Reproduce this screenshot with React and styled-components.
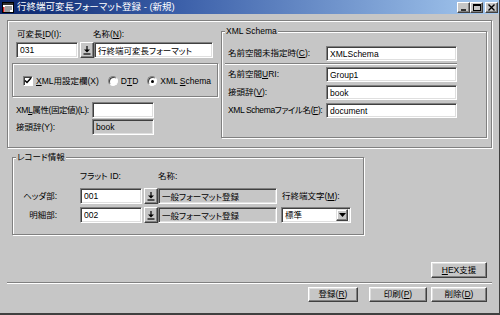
import React from 'react';
import styled, { createGlobalStyle } from 'styled-components';

const FONT = `"Liberation Sans", "Noto Sans CJK JP", sans-serif`;
const GRAY = '#c6c6c6';

const Global = createGlobalStyle`
  html, body { margin: 0; padding: 0; background: ${GRAY}; }
  body {
    font-family: ${FONT};
    font-size: 8.5px;
    color: #000;
    overflow: hidden;
    font-feature-settings: "palt";
  }
  * { box-sizing: border-box; }
`;

const Window = styled.div`
  width: 500px;
  height: 315px;
  background: ${GRAY};
  display: flex;
  flex-direction: column;
  border-right: 1px solid #404040;
  border-bottom: 2px solid #404040;
  overflow: hidden;
`;

const TitleBar = styled.div`
  height: 14px;
  flex: none;
  display: flex;
  align-items: center;
  padding: 0 1px 0 2px;
  background: linear-gradient(90deg, #0a246a 0%, #3a5ea8 35%, #a6caf0 100%);
`;

const TitleText = styled.span`
  color: #fff;
  font-size: 9.5px;
  line-height: 14px;
  margin-left: 3px;
  flex: 1;
  white-space: nowrap;
`;

const CapButton = styled.div`
  width: 13px;
  height: 11px;
  margin-left: ${(p) => (p.$gap ? 2 : 0)}px;
  background: ${GRAY};
  border: 1px solid;
  border-color: #fff #404040 #404040 #fff;
  box-shadow: inset -1px -1px #808080;
  display: flex;
  align-items: center;
  justify-content: center;
`;

const Body = styled.div`
  flex: 1;
  display: flex;
  flex-direction: column;
`;

const TopFrame = styled.div`
  margin: 6px 0 0 7px;
  width: 485px;
  height: 128px;
  border: 1px solid #808080;
  box-shadow: inset 1px 1px #fff, 1px 1px #fff;
  display: flex;
  align-items: flex-start;
`;

const LeftCol = styled.div`
  width: 206px;
  margin-left: 4px;
  display: flex;
  flex-direction: column;
`;

const LabelPair = styled.div`
  margin-top: 8px;
  height: 11px;
  display: flex;
  align-items: center;
  padding-left: 5px;
`;

const Label = styled.span`
  display: inline-block;
  width: ${(p) => (p.$w ? `${p.$w}px` : 'auto')};
  text-align: ${(p) => p.$align || 'left'};
  margin-left: ${(p) => p.$ml || 0}px;
  letter-spacing: ${(p) => (p.$tight ? '-0.4px' : 'normal')};
  white-space: nowrap;
  line-height: 11px;
  flex: none;
`;

const U = styled.span`
  text-decoration: underline;
`;

const Row = styled.div`
  display: flex;
  align-items: center;
  margin-top: ${(p) => p.$mt || 0}px;
  padding-left: ${(p) => p.$pl || 0}px;
`;

const TextBox = styled.input`
  width: ${(p) => p.$w}px;
  height: ${(p) => p.$h || 16}px;
  flex: none;
  margin: 0;
  margin-left: ${(p) => p.$ml || 0}px;
  padding: 0 0 0 3px;
  font-family: ${FONT};
  font-size: 8.5px;
  font-feature-settings: "palt";
  color: #000;
  background: ${(p) => (p.readOnly && p.$gray ? GRAY : '#fff')};
  border: 1px solid;
  border-color: #808080 #fff #fff #808080;
  box-shadow: inset 1px 1px #404040, inset -1px -1px #dfdfdf;
  outline: none;
`;

const PickButton = styled.div`
  width: 14px;
  height: 16px;
  flex: none;
  margin-left: 2px;
  background: ${GRAY};
  border: 1px solid;
  border-color: #fff #404040 #404040 #fff;
  box-shadow: inset -1px -1px #808080;
  display: flex;
  align-items: center;
  justify-content: center;
`;

const OptionsBox = styled.div`
  margin-top: 5px;
  height: 34px;
  width: 206px;
  border: 1px solid #808080;
  box-shadow: inset 1px 1px #fff, 1px 1px #fff;
  display: flex;
  align-items: center;
  padding-left: 10px;
  padding-top: 2px;
`;

const Check = styled.span`
  width: 10px;
  height: 10px;
  flex: none;
  background: #fff;
  border: 1px solid;
  border-color: #808080 #fff #fff #808080;
  box-shadow: inset 1px 1px #404040;
  display: flex;
  align-items: center;
  justify-content: center;
  margin-right: 3px;
`;

const Radio = styled.span`
  width: 10px;
  height: 10px;
  flex: none;
  border-radius: 50%;
  background: #fff;
  border: 1px solid;
  border-color: #808080 #fff #fff #808080;
  box-shadow: inset 1px 1px #404040;
  display: flex;
  align-items: center;
  justify-content: center;
  margin-left: ${(p) => p.$ml || 0}px;
  margin-right: 3px;
  &::after {
    content: '';
    display: ${(p) => (p.$on ? 'block' : 'none')};
    width: 3px;
    height: 3px;
    border-radius: 50%;
    background: #000;
  }
`;

const Group = styled.div`
  position: relative;
  width: ${(p) => p.$w}px;
  height: ${(p) => p.$h}px;
  margin-top: ${(p) => p.$mt || 0}px;
  margin-left: ${(p) => p.$ml || 0}px;
  flex: none;
  border: 1px solid #808080;
  box-shadow: inset 1px 1px #fff, 1px 1px #fff;
  display: flex;
  flex-direction: column;
  padding-top: ${(p) => p.$pt || 0}px;
  padding-left: ${(p) => p.$pl || 0}px;
`;

const Legend = styled.span`
  position: absolute;
  top: -6px;
  left: 3px;
  padding: 0 1px;
  background: ${GRAY};
  line-height: 11px;
  white-space: nowrap;
`;

const Etched = styled.div`
  width: ${(p) => p.$w}px;
  height: 2px;
  flex: none;
  margin: ${(p) => p.$m};
  border-top: 1px solid #808080;
  border-bottom: 1px solid #fff;
`;

const Combo = styled.div`
  width: 70px;
  height: 16px;
  flex: none;
  margin-left: 4px;
  background: #fff;
  border: 1px solid;
  border-color: #808080 #fff #fff #808080;
  box-shadow: inset 1px 1px #404040, inset -1px -1px #dfdfdf;
  display: flex;
  align-items: center;
  padding: 2px 2px 2px 3px;
`;

const ComboText = styled.span`
  flex: 1;
  line-height: 11px;
`;

const ComboButton = styled.span`
  width: 12px;
  height: 12px;
  flex: none;
  background: ${GRAY};
  border: 1px solid;
  border-color: #dfdfdf #404040 #404040 #dfdfdf;
  box-shadow: inset -1px -1px #808080, inset 1px 1px #fff;
  display: flex;
  align-items: center;
  justify-content: center;
`;

const ButtonRow = styled.div`
  display: flex;
  justify-content: flex-end;
  padding-right: 12px;
  margin-top: ${(p) => p.$mt || 0}px;
`;

const PushButton = styled.div`
  width: ${(p) => p.$w}px;
  height: ${(p) => p.$h || 15}px;
  margin-left: ${(p) => p.$ml || 0}px;
  flex: none;
  background: ${GRAY};
  border: 1px solid;
  border-color: #fff #404040 #404040 #fff;
  box-shadow: inset -1px -1px #808080, inset 1px 1px #dfdfdf;
  display: flex;
  align-items: center;
  justify-content: center;
  line-height: 11px;
  white-space: nowrap;
`;

const PickIcon = () => (
  <svg width="8" height="9" viewBox="0 0 8 9">
    <path d="M4 0v5" stroke="#000" strokeWidth="1.2" />
    <path d="M1 3.5h6L4 6.5z" fill="#000" />
    <path d="M0.5 8h7" stroke="#000" strokeWidth="1.2" />
  </svg>
);

const AppIcon = () => (
  <svg width="12" height="11" viewBox="0 0 12 11">
    <rect x="0.5" y="0.5" width="11" height="10" fill="#fff" stroke="#000" />
    <rect x="1" y="1" width="10" height="2" fill="#303030" />
    <path d="M3 5h7M3 7h7M3 9h5" stroke="#404040" />
    <rect x="1" y="5" width="1.5" height="5" fill="#d02020" />
  </svg>
);

export default function App() {
  return (
    <>
      <Global />
      <Window>
        <TitleBar>
          <AppIcon />
          <TitleText>行終端可変長フォーマット登録 - (新規)</TitleText>
          <CapButton>
            <svg width="7" height="7" viewBox="0 0 7 7">
              <path d="M1 6h5" stroke="#000" strokeWidth="1.5" />
            </svg>
          </CapButton>
          <CapButton>
            <svg width="8" height="7" viewBox="0 0 8 7">
              <rect x="0.5" y="0.5" width="7" height="6" fill="none" stroke="#000" />
              <path d="M0.5 1.5h7" stroke="#000" />
            </svg>
          </CapButton>
          <CapButton $gap>
            <svg width="7" height="7" viewBox="0 0 7 7">
              <path d="M0.5 0.5l6 6M6.5 0.5l-6 6" stroke="#000" strokeWidth="1.4" />
            </svg>
          </CapButton>
        </TitleBar>

        <Body>
          <TopFrame>
            <LeftCol>
              <LabelPair>
                <Label $w={76}>
                  可変長<U>I</U>D(I):
                </Label>
                <Label>
                  名称(<U>N</U>):
                </Label>
              </LabelPair>
              <Row $mt={2} $pl={4}>
                <TextBox $w={62} readOnly value="031" />
                <PickButton>
                  <PickIcon />
                </PickButton>
                <TextBox $w={119} readOnly value="行終端可変長フォーマット" />
              </Row>
              <OptionsBox>
                <Check>
                  <svg width="8" height="8" viewBox="0 0 8 8">
                    <path d="M1 3.5l2 2 4-4.5" stroke="#000" strokeWidth="1.5" fill="none" />
                  </svg>
                </Check>
                <Label>
                  <U>X</U>ML用設定欄(X)
                </Label>
                <Radio $ml={9} />
                <Label>
                  D<U>T</U>D
                </Label>
                <Radio $ml={9} $on />
                <Label>
                  XML <U>S</U>chema
                </Label>
              </OptionsBox>
              <Row $mt={5} $pl={4}>
                <Label $w={76} $tight>
                  XM<U>L</U>属性(固定値)(L):
                </Label>
                <TextBox $w={62} readOnly value="" />
              </Row>
              <Row $mt={1} $pl={4}>
                <Label $w={76}>接頭辞(Y):</Label>
                <TextBox $w={62} readOnly $gray value="book" />
              </Row>
            </LeftCol>

            <Group $w={266} $h={107} $mt={10} $ml={3} $pt={14} $pl={6}>
              <Legend>XML Schema</Legend>
              <Row>
                <Label $w={98}>
                  名前空間未指定時(<U>C</U>):
                </Label>
                <TextBox $w={131} $h={15} readOnly value="XMLSchema" />
              </Row>
              <Etched $w={232} $m="2px 0 2px -3px" />
              <Row>
                <Label $w={98}>
                  名前空間<U>U</U>RI:
                </Label>
                <TextBox $w={131} $h={15} readOnly value="Group1" />
              </Row>
              <Row $mt={3}>
                <Label $w={98}>
                  接頭辞(<U>V</U>):
                </Label>
                <TextBox $w={131} $h={15} readOnly value="book" />
              </Row>
              <Row $mt={3}>
                <Label $w={98} $tight>
                  XML Schemaファイル名(<U>F</U>):
                </Label>
                <TextBox $w={131} $h={15} readOnly value="document" />
              </Row>
            </Group>
          </TopFrame>

          <Group $w={352} $h={78} $mt={9} $ml={12} $pt={13}>
            <Legend>レコード情報</Legend>
            <Row $pl={67}>
              <Label $w={78}>フラット ID:</Label>
              <Label>名称:</Label>
            </Row>
            <Row $mt={6}>
              <Label $w={44} $align="right">
                ヘッダ部:
              </Label>
              <TextBox $w={62} $ml={23} readOnly value="001" />
              <PickButton>
                <PickIcon />
              </PickButton>
              <TextBox $w={119} readOnly $gray value="一般フォーマット登録" />
              <Label $ml={5}>
                行終端文字(<U>M</U>):
              </Label>
            </Row>
            <Row $mt={3}>
              <Label $w={44} $align="right">
                明細部:
              </Label>
              <TextBox $w={62} $ml={23} readOnly value="002" />
              <PickButton>
                <PickIcon />
              </PickButton>
              <TextBox $w={119} readOnly $gray value="一般フォーマット登録" />
              <Combo>
                <ComboText>標準</ComboText>
                <ComboButton>
                  <svg width="7" height="4" viewBox="0 0 7 4">
                    <path d="M0 0h7L3.5 4z" fill="#000" />
                  </svg>
                </ComboButton>
              </Combo>
            </Row>
          </Group>

          <ButtonRow $mt={27}>
            <PushButton $w={56} $h={16}>
              <U>H</U>EX支援
            </PushButton>
          </ButtonRow>
          <Etched $w={485} $m="4px 0 0 7px" />
          <ButtonRow $mt={3}>
            <PushButton $w={50}>
              登録(<U>R</U>)
            </PushButton>
            <PushButton $w={58} $ml={11}>
              印刷(<U>P</U>)
            </PushButton>
            <PushButton $w={56} $ml={4}>
              削除(<U>D</U>)
            </PushButton>
          </ButtonRow>
        </Body>
      </Window>
    </>
  );
}
